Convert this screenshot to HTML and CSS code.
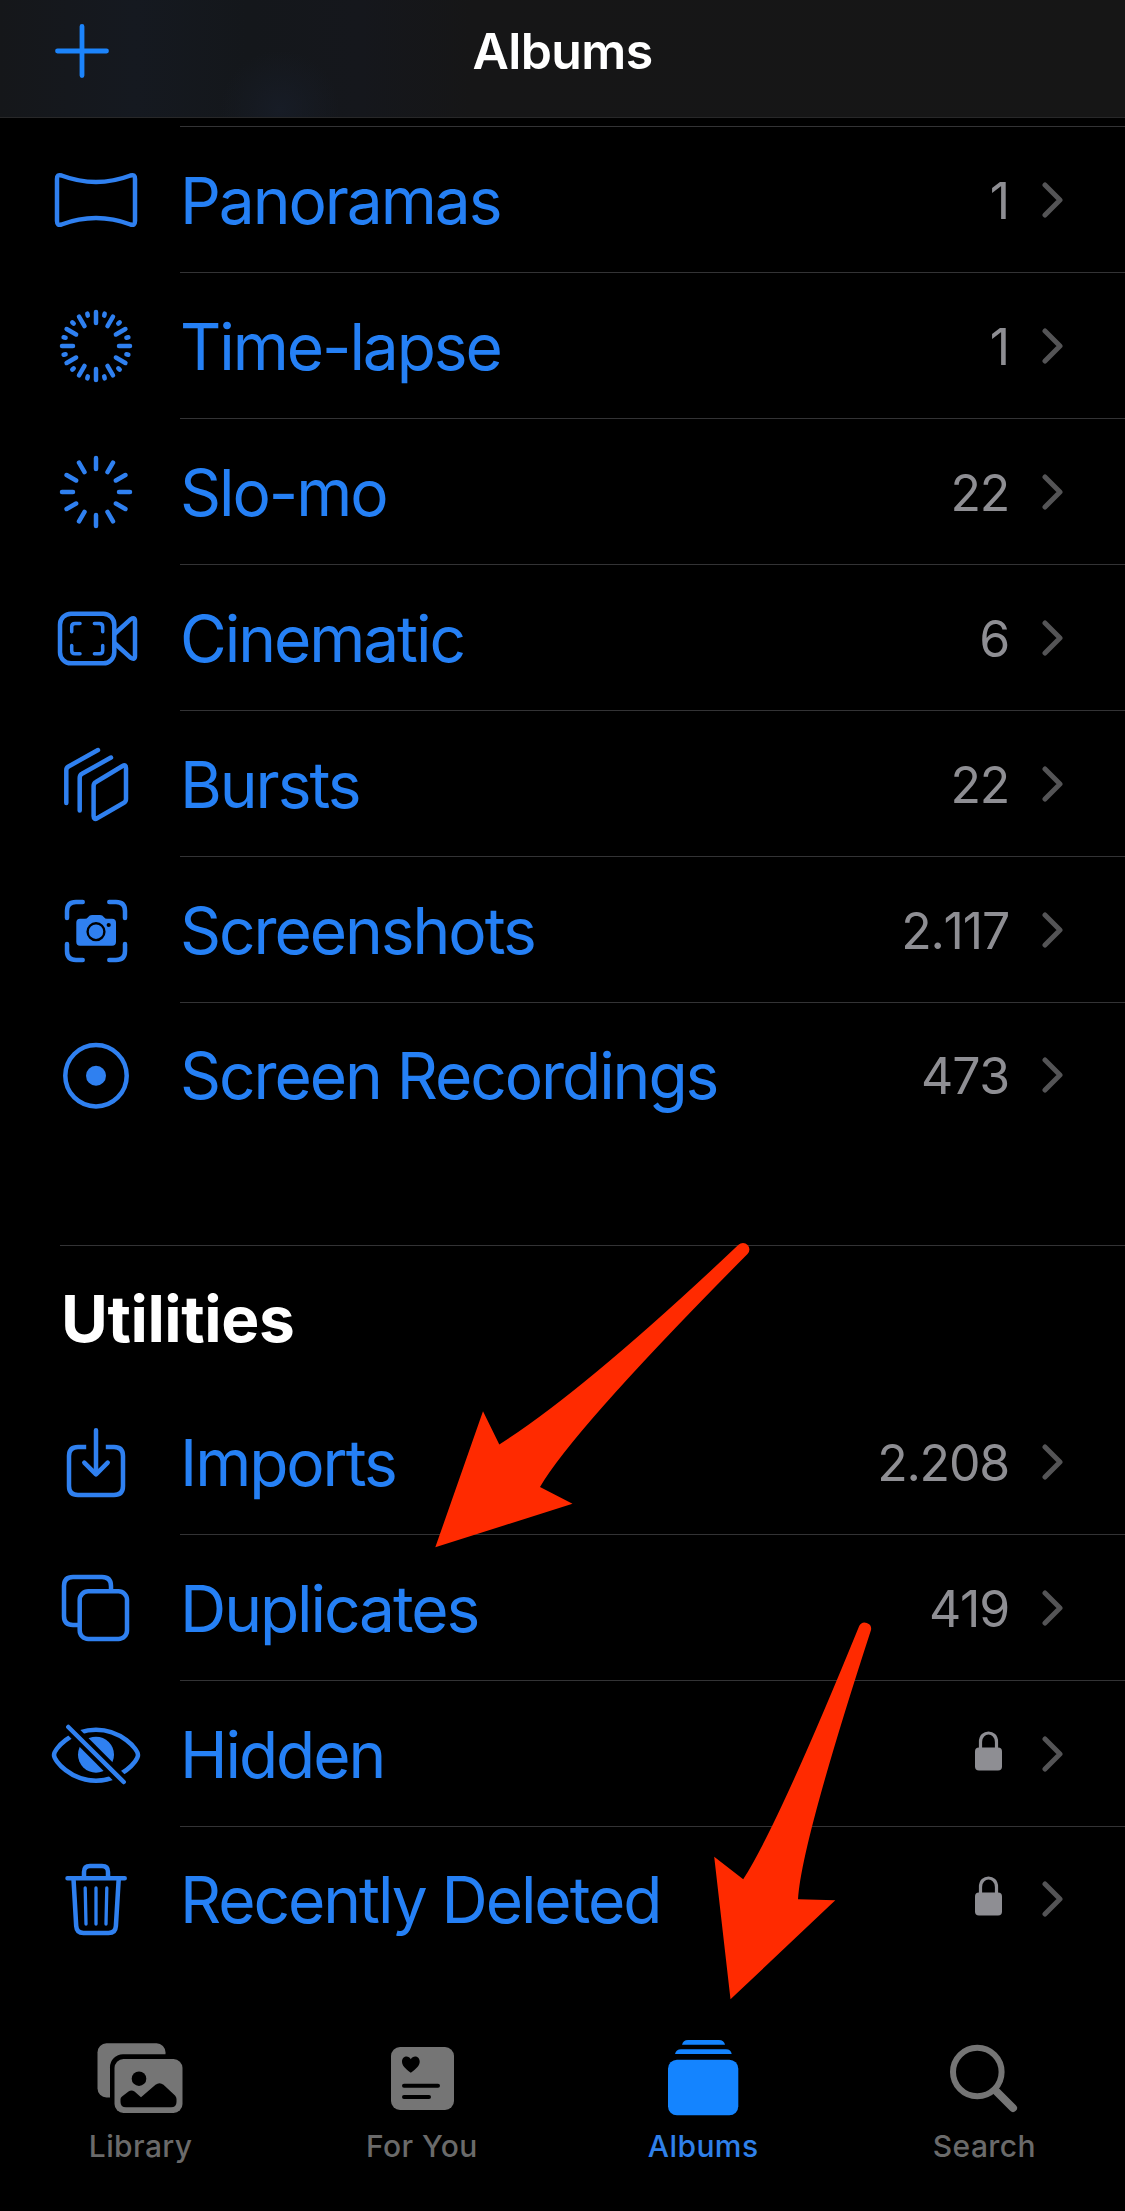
FILE: index.html
```html
<!DOCTYPE html>
<html lang="en">
<head>
    <meta charset="UTF-8">
    <meta name="viewport" content="width=device-width, initial-scale=1.0">
    <title>Albums</title>
    <link rel="stylesheet" href="styles.css">
</head>
<body>
    <!-- Shared row glyphs -->
    <svg class="symbols">
        <symbol id="chevron" viewBox="0 0 21 36">
            <path d="M3 3 L18 18 L3 33"/>
        </symbol>
        <symbol id="lock" viewBox="0 0 27 40">
            <rect x="0" y="16.5" width="27" height="23" rx="4"/>
            <path d="M5.5 19 V11 C5.5 -1 21.5 -1 21.5 11 V19" fill="none" stroke="currentColor" stroke-width="3.2"/>
        </symbol>
        <symbol id="rays" viewBox="-50 -51 100 101">
            <path d="M0 -23 V-34 M0 23 V34 M-23 0 H-34 M23 0 H34 M11.5 -19.9 L17 -29.4 M19.9 -11.5 L29.4 -17 M19.9 11.5 L29.4 17 M11.5 19.9 L17 29.4 M-11.5 19.9 L-17 29.4 M-19.9 11.5 L-29.4 17 M-19.9 -11.5 L-29.4 -17 M-11.5 -19.9 L-17 -29.4"/>
        </symbol>
    </svg>

    <div class="phone">
        <header class="header">
            <svg class="add-icon" viewBox="0 0 54 54">
                <path d="M27 2.5 V51.5 M2.5 27 H51.5"/>
            </svg>
            <h1>Albums</h1>
        </header>

        <main>
            <ul class="album-list media-types">
                <li class="row">
                    <svg class="icon" viewBox="0 0 100 101">
                        <path d="M11 30 Q11 25 15.5 26.5 Q50 39.5 84.5 26.5 Q89 25 89 30 V72 Q89 77 84.5 75.5 Q50 62.5 15.5 75.5 Q11 77 11 72 Z"/>
                    </svg>
                    <div class="row-body">
                        <span class="name">Panoramas</span>
                        <span class="count">1</span>
                        <svg class="chevron"><use href="#chevron"/></svg>
                    </div>
                </li>
                <li class="row">
                    <svg class="icon" viewBox="0 0 100 101">
                        <use href="#rays" width="100" height="101"/>
                        <path transform="translate(50 51)" d="M8.2 -30.4 L8.7 -32.4 M22.3 -22.3 L23.7 -23.7 M30.4 -8.2 L32.4 -8.7 M30.4 8.2 L32.4 8.7 M22.3 22.3 L23.7 23.7 M8.2 30.4 L8.7 32.4 M-8.2 30.4 L-8.7 32.4 M-22.3 22.3 L-23.7 23.7 M-30.4 8.2 L-32.4 8.7 M-30.4 -8.2 L-32.4 -8.7 M-22.3 -22.3 L-23.7 -23.7 M-8.2 -30.4 L-8.7 -32.4"/>
                    </svg>
                    <div class="row-body">
                        <span class="name">Time-lapse</span>
                        <span class="count">1</span>
                        <svg class="chevron"><use href="#chevron"/></svg>
                    </div>
                </li>
                <li class="row">
                    <svg class="icon" viewBox="0 0 100 101">
                        <use href="#rays" width="100" height="101"/>
                    </svg>
                    <div class="row-body">
                        <span class="name">Slo-mo</span>
                        <span class="count">22</span>
                        <svg class="chevron"><use href="#chevron"/></svg>
                    </div>
                </li>
                <li class="row">
                    <svg class="icon" viewBox="0 0 100 101">
                        <rect x="14" y="26.7" width="54.3" height="49.6" rx="11"/>
                        <path d="M69 46.5 L84.5 32.3 Q89 29.5 89 34 V69 Q89 73.5 84.5 70.7 L69 56.5"/>
                        <path stroke-width="3.5" d="M34 36.4 H29 Q25.7 36.4 25.7 39.7 V44.7 M48.4 36.4 H53.4 Q56.7 36.4 56.7 39.7 V44.7 M34 66.7 H29 Q25.7 66.7 25.7 63.4 V58.4 M48.4 66.7 H53.4 Q56.7 66.7 56.7 63.4 V58.4"/>
                    </svg>
                    <div class="row-body">
                        <span class="name">Cinematic</span>
                        <span class="count">6</span>
                        <svg class="chevron"><use href="#chevron"/></svg>
                    </div>
                </li>
                <li class="row">
                    <svg class="icon" viewBox="0 0 100 101">
                        <path d="M52 17 L22.5 33.5 Q20.3 34.8 20.3 37 V70"/>
                        <path d="M65 24.5 L36 40.8 Q33.7 42 33.7 45 V77.5"/>
                        <path d="M50 49 L76.5 33 Q80 31 80 35 V66 Q80 68.7 77.5 70 L51.5 85 Q47.6 87.5 47.6 83 V53 Q47.6 50.3 50 49 Z"/>
                    </svg>
                    <div class="row-body">
                        <span class="name">Bursts</span>
                        <span class="count">22</span>
                        <svg class="chevron"><use href="#chevron"/></svg>
                    </div>
                </li>
                <li class="row">
                    <svg class="icon" viewBox="0 0 100 101">
                        <path d="M36.7 23 H30 Q21 23 21 32 V39 M63.3 23 H70 Q79 23 79 32 V39 M36.7 81 H30 Q21 81 21 72 V65 M63.3 81 H70 Q79 81 79 72 V65"/>
                        <path class="solid" d="M34 39.7 H39 Q41 39.7 42 38.2 Q43.5 36 46 36 H54 Q56.5 36 58 38.2 Q59 39.7 61 39.7 H66 Q70 39.7 70 43.7 V62.7 Q70 66.7 66 66.7 H34 Q30.3 66.7 30.3 62.7 V43.7 Q30.3 39.7 34 39.7 Z"/>
                        <circle class="cutout-ring" cx="50" cy="52.7" r="8.4"/>
                        <circle class="cutout" cx="62.7" cy="46" r="2.1"/>
                    </svg>
                    <div class="row-body">
                        <span class="name">Screenshots</span>
                        <span class="count">2.117</span>
                        <svg class="chevron"><use href="#chevron"/></svg>
                    </div>
                </li>
                <li class="row">
                    <svg class="icon" viewBox="0 0 100 101">
                        <circle cx="50" cy="50.7" r="30.7"/>
                        <circle class="solid" cx="50" cy="50.7" r="10"/>
                    </svg>
                    <div class="row-body">
                        <span class="name">Screen Recordings</span>
                        <span class="count">473</span>
                        <svg class="chevron"><use href="#chevron"/></svg>
                    </div>
                </li>
            </ul>

            <section class="utilities">
                <h2>Utilities</h2>
                <ul class="album-list">
                    <li class="row">
                        <svg class="icon" viewBox="0 0 100 101">
                            <path stroke-linecap="butt" d="M40.2 36 H32 Q23 36 23 45 V75 Q23 84 32 84 H68 Q77 84 77 75 V45 Q77 36 68 36 H59.8"/>
                            <path d="M50 19.3 V62.5 M38.3 51.7 L50 63.3 L61.7 51.7"/>
                        </svg>
                        <div class="row-body">
                            <span class="name">Imports</span>
                            <span class="count">2.208</span>
                            <svg class="chevron"><use href="#chevron"/></svg>
                        </div>
                    </li>
                    <li class="row">
                        <svg class="icon" viewBox="0 0 100 101">
                            <path d="M32 68 H27 Q18 68 18 59 V29 Q18 20 27 20 H56 Q65 20 65 29 V33"/>
                            <rect x="33.7" y="34.3" width="47.3" height="47.7" rx="8.5"/>
                        </svg>
                        <div class="row-body">
                            <span class="name">Duplicates</span>
                            <span class="count">419</span>
                            <svg class="chevron"><use href="#chevron"/></svg>
                        </div>
                    </li>
                    <li class="row">
                        <svg class="icon" viewBox="0 0 100 101">
                            <path d="M8 52 C8 46 25 26.7 50 26.7 S92 46 92 52 S75 77.7 50 77.7 S8 58 8 52 Z"/>
                            <circle class="solid" cx="50" cy="51.7" r="18"/>
                            <path class="slash-gap" d="M19 20.4 L81 82.6"/>
                            <path d="M22.3 24 L77.7 79"/>
                        </svg>
                        <div class="row-body">
                            <span class="name">Hidden</span>
                            <svg class="lock"><use href="#lock"/></svg>
                            <svg class="chevron"><use href="#chevron"/></svg>
                        </div>
                    </li>
                    <li class="row">
                        <svg class="icon" viewBox="0 0 100 101">
                            <path d="M21.5 29.3 H78.7 M38 28 V23 Q38 17 44 17 H56 Q62 17 62 23 V28"/>
                            <path d="M27.5 30 L30.2 77 Q30.7 84 37.5 84 H62.5 Q69.5 84 69.9 77 L72.7 30"/>
                            <path stroke-width="3.3" d="M39.2 39 L40 75 M50 39 V75 M60.8 39 L60 75"/>
                        </svg>
                        <div class="row-body">
                            <span class="name">Recently Deleted</span>
                            <svg class="lock"><use href="#lock"/></svg>
                            <svg class="chevron"><use href="#chevron"/></svg>
                        </div>
                    </li>
                </ul>
            </section>
        </main>

        <nav class="tab-bar">
            <a class="tab">
                <svg viewBox="0 0 100 90">
                    <rect x="6.5" y="13.3" width="68" height="54.2" rx="9"/>
                    <rect class="cutout" x="19" y="24.3" width="80" height="66" rx="13"/>
                    <rect x="23.5" y="29" width="68" height="54" rx="9"/>
                    <circle class="cutout" cx="48" cy="48.7" r="7.3"/>
                    <path class="cutout" d="M29.5 69 Q29.5 67.5 31 66.5 L37.5 61.5 Q40.5 59.5 43.5 61.5 L50 67.3 L64.5 54.8 Q68.5 51.8 72.5 54.8 L84 65.5 Q85.5 67 85.5 69 V72 Q85.5 77.3 80 77.3 H35 Q29.5 77.3 29.5 72 Z"/>
                </svg>
                <span>Library</span>
            </a>
            <a class="tab">
                <svg viewBox="0 0 100 90">
                    <rect x="19" y="17" width="63" height="63" rx="9"/>
                    <path class="cutout" d="M38.8 42.7 C33 38.5 30 35.5 30 31.5 C30 26 36.5 24.5 38.8 29.3 C41.2 24.5 47.7 26 47.7 31.5 C47.7 35.5 44.7 38.5 38.8 42.7 Z"/>
                    <path class="cutout-line" d="M32 55.7 H66 M32 67 H57"/>
                </svg>
                <span>For You</span>
            </a>
            <a class="tab active">
                <svg viewBox="0 0 100 90">
                    <path d="M29 14.7 Q30 10 35 10 H66 Q71 10 72 14.7 Z"/>
                    <path d="M22 24 Q23 19.3 28 19.3 H73 Q78 19.3 78.7 24 Z"/>
                    <rect x="15" y="29.7" width="70.3" height="55.6" rx="9"/>
                </svg>
                <span>Albums</span>
            </a>
            <a class="tab">
                <svg viewBox="0 0 100 90">
                    <circle class="outline" cx="43.3" cy="42" r="24.3"/>
                    <path class="outline handle" d="M61.5 60.5 L79 78"/>
                </svg>
                <span>Search</span>
            </a>
        </nav>

        <!-- Arrows pointing at Duplicates and the Albums tab -->
        <svg class="arrows" viewBox="0 0 1125 2211">
            <path d="M435.3 1547.3 L483 1411.3 L499.3 1444.5 Q585 1390 738.5 1244.8 A6.3 6.3 0 0 1 747.5 1254 Q573 1430 540 1487 L572.5 1503.7 Z"/>
            <path d="M730.5 1999.3 L714.2 1856.7 L743.2 1879.3 Q778 1825 859.2 1626 A6.3 6.3 0 0 1 871 1630 Q801 1845 798 1899.3 L835.3 1900.3 Z"/>
        </svg>
    </div>
</body>
</html>
```
FILE: styles.css
```css
* {
    box-sizing: border-box;
}

body {
    margin: 0;
    background: #000;
    font-family: Inter, "Liberation Sans", sans-serif;
}

h1, h2, ul {
    margin: 0;
    padding: 0;
}

svg {
    display: block;
    flex: none;
}

.symbols {
    position: absolute;
    width: 0;
    height: 0;
}

.phone {
    position: relative;
    width: 1125px;
    height: 2211px;
    display: flex;
    flex-direction: column;
    overflow: hidden;
}

/* Header */
.header {
    display: grid;
    grid-template-columns: 1fr auto 1fr;
    align-items: center;
    height: 118px;
    padding: 0 55px 16px;
    background:
        radial-gradient(circle at 280px 110px, #171c26 0, transparent 60px),
        linear-gradient(90deg, #15171a 0%, #151920 12%, #14171b 22%, #15171c 32%, #161617 42%, #161616 100%);
    border-bottom: 1px solid #282829;
}

.header h1 {
    color: #fff;
    font-size: 50px;
    font-weight: 600;
    letter-spacing: -0.6px;
    line-height: 60px;
}

.add-icon {
    width: 54px;
    height: 54px;
    fill: none;
    stroke: #1c84fb;
    stroke-width: 4.8;
    stroke-linecap: round;
}

/* Album rows */
.album-list {
    list-style: none;
}

.media-types {
    padding-top: 8px;
}

.media-types::before {
    content: "";
    display: block;
    height: 1px;
    margin-left: 180px;
    background: #333335;
}

.row {
    display: flex;
    height: 146px;
    padding-left: 46px;
}

.row:last-child {
    height: 143px;
}

.icon {
    width: 100px;
    height: 101px;
    margin: 22px 34px 0 0;
    color: #2f80f0;
    fill: none;
    stroke: currentColor;
    stroke-width: 4.5;
    stroke-linecap: round;
    stroke-linejoin: round;
}

.icon .solid {
    fill: currentColor;
    stroke: none;
}

.icon .cutout,
.tab .cutout {
    fill: #000;
    stroke: none;
}

.icon .cutout-ring {
    stroke: #000;
    stroke-width: 2.4;
}

.icon .slash-gap {
    stroke: #000;
    stroke-width: 12.5;
    stroke-linecap: butt;
}

.row-body {
    flex: 1;
    display: flex;
    align-items: center;
    padding-right: 62px;
    border-bottom: 1px solid #333335;
}

.row:last-child .row-body {
    border-bottom: none;
}

.name {
    flex: 1;
    padding-top: 2px;
    color: #2580f5;
    font-size: 64px;
    letter-spacing: -2.05px;
    line-height: 78px;
    white-space: nowrap;
}

.count {
    margin-right: -1px;
    padding-top: 2px;
    color: #8e8e93;
    font-size: 50px;
    font-kerning: none;
    letter-spacing: -1.2px;
    line-height: 60px;
}

.lock {
    width: 27px;
    height: 40px;
    margin: 0 6px 5px 0;
    color: #8e8e93;
    fill: currentColor;
}

.chevron {
    width: 21px;
    height: 36px;
    margin-left: 34px;
    fill: none;
    stroke: #545456;
    stroke-width: 5;
    stroke-linecap: round;
    stroke-linejoin: round;
}

/* Utilities */
.utilities {
    margin: 99px 0 0 60px;
    border-top: 1px solid #333335;
}

.utilities h2 {
    padding: 34px 0 31px 1px;
    color: #fff;
    font-size: 64px;
    font-weight: 700;
    letter-spacing: -0.4px;
    line-height: 78px;
}

.utilities .album-list {
    margin-left: -60px;
}

/* Tab bar */
.tab-bar {
    display: flex;
    margin-top: auto;
    height: 181px;
}

.tab {
    flex: 1;
    display: flex;
    flex-direction: column;
    align-items: center;
    color: #6a6a6a;
    font-size: 30px;
    font-weight: 500;
    letter-spacing: 0.4px;
    line-height: 36px;
}

.tab svg {
    width: 100px;
    height: 90px;
    margin-bottom: 8px;
    fill: #757575;
}

.tab.active {
    color: #2f80ea;
}

.tab.active svg {
    fill: #1484ff;
}

.tab .cutout-line {
    fill: none;
    stroke: #000;
    stroke-width: 4;
    stroke-linecap: round;
}

.tab .outline {
    fill: none;
    stroke: #757575;
    stroke-width: 6;
    stroke-linecap: round;
}

.tab .handle {
    stroke-width: 8;
}

.arrows {
    position: absolute;
    top: 0;
    left: 0;
    width: 1125px;
    height: 2211px;
    fill: #ff2a00;
    pointer-events: none;
}
```
